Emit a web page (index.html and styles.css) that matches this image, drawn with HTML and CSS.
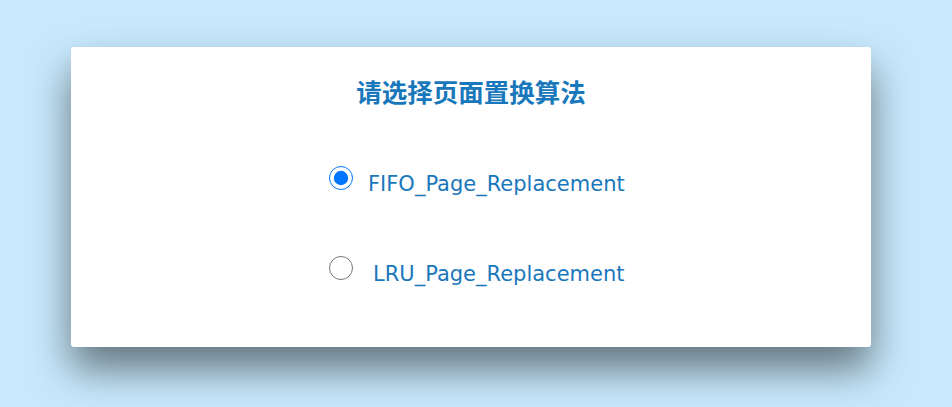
FILE: index.html
```html
<!DOCTYPE html>
<html lang="zh">
<head>
<meta charset="utf-8">
<link rel="stylesheet" href="styles.css">
</head>
<body>
<div class="card">
  <h1 class="title">请选择页面置换算法</h1>
  <div class="options">
    <label class="option"><input type="radio" name="alg" checked><span class="label">FIFO_Page_Replacement</span></label>
    <label class="option"><input type="radio" name="alg"><span class="label lru">LRU_Page_Replacement</span></label>
  </div>
</div>
</body>
</html>
```
FILE: styles.css
```css
html, body {
  margin: 0;
  padding: 0;
}
body {
  background: #c8e9fd;
  width: 952px;
  height: 407px;
  overflow: hidden;
  font-family: "DejaVu Sans", "Noto Sans CJK SC", sans-serif;
}
.card {
  box-sizing: border-box;
  width: 800px;
  height: 300px;
  margin: 47px 0 0 71px;
  background: #fff;
  border-radius: 3px;
  box-shadow: 0 22px 40px rgba(0, 0, 0, 0.5);
  padding-top: 75px;
}
.title {
  margin: 0;
  position: relative;
  top: -46px;
  height: 0;
  text-align: center;
  font-family: "Noto Sans CJK SC", sans-serif;
  font-size: 25.5px;
  font-weight: 700;
  color: #1977bb;
  line-height: 30px;
}
.options {
  display: flex;
  flex-direction: column;
  gap: 66px;
  padding-left: 258px;
  padding-top: 44px;
}
.option {
  display: flex;
  align-items: flex-start;
  height: 24px;
}
.option input {
  width: 24px;
  height: 24px;
  margin: 0;
}
.label {
  margin-left: 15px;
  margin-top: 6px;
  font-size: 21px;
  line-height: 24px;
  color: #1977bb;
}
.label.lru {
  margin-left: 20px;
}
```
